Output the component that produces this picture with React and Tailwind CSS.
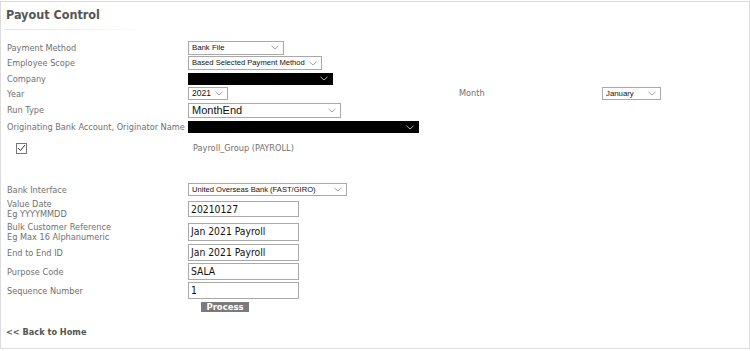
import React from "react";

const Chev = ({ light = false }) => (
  <svg width="8" height="5" viewBox="0 0 8 5" className="shrink-0">
    <path d="M0.5 0.8 L4 4 L7.5 0.8" fill="none" stroke={light ? "#ddd" : "#888"} strokeWidth="0.8" />
  </svg>
);

const Sel = ({ w, h = "h-[14px]", text, textCls = "text-[7.8px]", black = false }) => (
  <div
    className={`${w} ${h} flex items-center justify-between pl-[3px] pr-[4px] border ${
      black ? "bg-black border-black" : "bg-white border-[#a9a9a9]"
    }`}
  >
    <span className={`${textCls} text-[#111] leading-none whitespace-nowrap`} style={{ fontFamily: "'Liberation Sans', Arial, sans-serif" }}>
      {text}
    </span>
    <Chev light={black} />
  </div>
);

const Inp = ({ text, h = "h-[16px]" }) => (
  <div className={`w-[111px] ${h} border border-[#a9a9a9] bg-white flex items-center pl-[2px]`}>
    <span className="text-[10.3px] text-[#111] leading-none whitespace-nowrap" style={{ fontFamily: "'DejaVu Sans Condensed', 'DejaVu Sans', sans-serif" }}>{text}</span>
  </div>
);

const Row = ({ h, label, children, label2 }) => (
  <div className={`flex items-center ${h}`}>
    <div className="w-[181px] shrink-0 text-[8.2px] text-[#707070] leading-[10px] whitespace-nowrap">
      {label}
      {label2 && <div>{label2}</div>}
    </div>
    {children}
  </div>
);

export default function App() {
  return (
    <div
      className="w-[750px] h-[351px] bg-white relative overflow-hidden"
      style={{ fontFamily: "'DejaVu Sans', Verdana, sans-serif" }}
    >
      <div className="absolute left-0 top-[1px] w-[750px] h-[348px] border-t border-b border-l border-r border-[#dcdcdc]">
        <div
          className="pl-[5px] pt-[5px] h-[27px] text-[12.5px] font-bold text-[#555] leading-[16px]"
          style={{ fontFamily: "'DejaVu Sans Condensed', 'DejaVu Sans', sans-serif" }}
        >
          Payout Control
        </div>
        <div className="ml-[3px] w-[150px] h-[1px] bg-gradient-to-r from-[#e3e3e3] to-white" />
        <div className="pl-[6px] pt-[10px] flex flex-col">
          <Row h="h-[15px]" label="Payment Method">
            <Sel w="w-[96px]" text="Bank File" />
          </Row>
          <Row h="h-[16px]" label="Employee Scope">
            <Sel w="w-[134px]" text="Based Selected Payment Method" textCls="text-[7.6px]" />
          </Row>
          <Row h="h-[15px]" label="Company">
            <Sel w="w-[145px]" h="h-[12px]" text="" black />
          </Row>
          <Row h="h-[15px]" label="Year">
            <Sel w="w-[40px]" h="h-[13px]" text="2021" textCls="text-[8.5px]" />
            <div className="w-[231px] shrink-0" />
            <div className="w-[143px] shrink-0 text-[8.2px] text-[#707070]">Month</div>
            <Sel w="w-[59px]" h="h-[13px]" text="January" />
          </Row>
          <Row h="h-[18px]" label="Run Type">
            <Sel w="w-[153px]" h="h-[15px]" text="MonthEnd" textCls="text-[11px]" />
          </Row>
          <Row h="h-[16px]" label="Originating Bank Account, Originator Name">
            <Sel w="w-[231px]" h="h-[12px]" text="" black />
          </Row>
          <div className="flex items-center h-[22px] mt-[2px]">
            <div className="w-[181px] shrink-0 pl-[9px]">
              <div className="w-[11px] h-[11px] border border-[#777] flex items-center justify-center">
                <svg width="9" height="8" viewBox="0 0 9 8">
                  <path d="M1 4 L3.5 6.5 L8 1" fill="none" stroke="#333" strokeWidth="1" />
                </svg>
              </div>
            </div>
            <div className="pl-[5px] text-[8.2px] text-[#707070]">Payroll_Group (PAYROLL)</div>
          </div>
          <div className="h-[22px]" />
          <Row h="h-[17px]" label="Bank Interface">
            <Sel w="w-[159px]" h="h-[13px]" text="United Overseas Bank (FAST/GIRO)" textCls="text-[7.6px]" />
          </Row>
          <Row h="h-[22px]" label="Value Date" label2="Eg YYYYMMDD">
            <Inp text="20210127" />
          </Row>
          <Row h="h-[23px]" label="Bulk Customer Reference" label2="Eg Max 16 Alphanumeric">
            <Inp text="Jan 2021 Payroll" h="h-[18px]" />
          </Row>
          <Row h="h-[19px]" label="End to End ID">
            <Inp text="Jan 2021 Payroll" h="h-[17px]" />
          </Row>
          <Row h="h-[19px]" label="Purpose Code">
            <Inp text="SALA" h="h-[17px]" />
          </Row>
          <Row h="h-[19px]" label="Sequence Number">
            <Inp text="1" h="h-[17px]" />
          </Row>
          <div className="pl-[194px] pt-[2px]">
            <div className="w-[48px] h-[10px] bg-[#7a7a7a] text-white text-[8.5px] font-bold leading-[10px] text-center">Process</div>
          </div>
          <div className="pt-[14px] -ml-[1px] text-[8.2px] font-bold text-[#555]">&lt;&lt; Back to Home</div>
        </div>
      </div>
    </div>
  );
}
